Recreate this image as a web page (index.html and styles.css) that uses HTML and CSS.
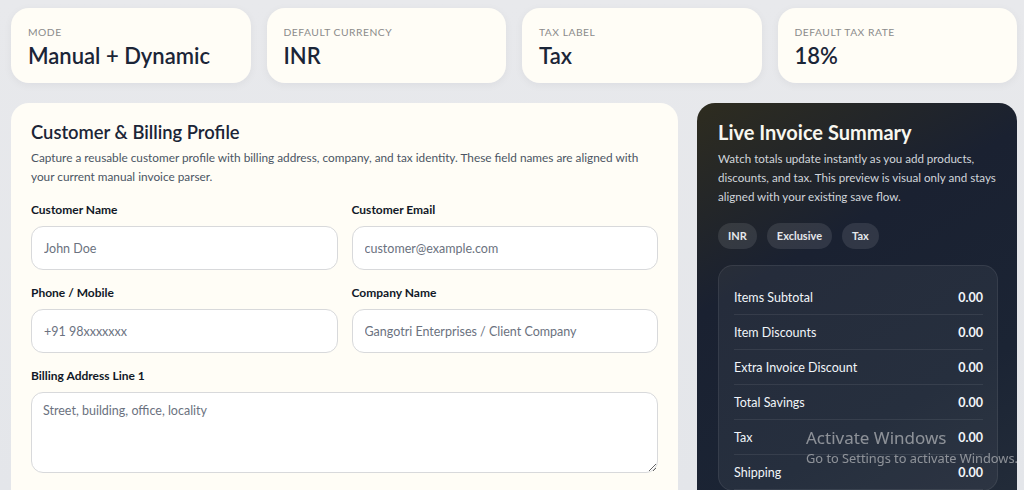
FILE: index.html
```html
<!DOCTYPE html>
<html lang="en">
<head>
    <meta charset="UTF-8">
    <meta name="viewport" content="width=device-width, initial-scale=1.0">
    <title>Manual Invoice</title>
    <link rel="stylesheet" href="styles.css">
</head>
<body>
    <div class="page">
        <!-- 상단 설정 카드 -->
        <div class="stats">
            <div class="stat">
                <div class="stat-label">Mode</div>
                <div class="stat-value">Manual + Dynamic</div>
            </div>
            <div class="stat">
                <div class="stat-label">Default Currency</div>
                <div class="stat-value">INR</div>
            </div>
            <div class="stat">
                <div class="stat-label">Tax Label</div>
                <div class="stat-value">Tax</div>
            </div>
            <div class="stat">
                <div class="stat-label">Default Tax Rate</div>
                <div class="stat-value">18%</div>
            </div>
        </div>

        <div class="main">
            <!-- 고객 정보 -->
            <section class="card">
                <h2 class="card-title">Customer &amp; Billing Profile</h2>
                <p class="card-desc">Capture a reusable customer profile with billing address, company, and tax identity. These field names are aligned with your current manual invoice parser.</p>

                <div class="fields">
                    <div class="field">
                        <label>Customer Name</label>
                        <input type="text" placeholder="John Doe">
                    </div>
                    <div class="field">
                        <label>Customer Email</label>
                        <input type="text" placeholder="customer@example.com">
                    </div>
                    <div class="field">
                        <label>Phone / Mobile</label>
                        <input type="text" placeholder="+91 98xxxxxxx">
                    </div>
                    <div class="field">
                        <label>Company Name</label>
                        <input type="text" placeholder="Gangotri Enterprises / Client Company">
                    </div>
                    <div class="field wide">
                        <label>Billing Address Line 1</label>
                        <textarea placeholder="Street, building, office, locality"></textarea>
                    </div>
                </div>
            </section>

            <!-- 요약 패널 -->
            <aside class="summary">
                <h2 class="summary-title">Live Invoice Summary</h2>
                <p class="summary-desc">Watch totals update instantly as you add products, discounts, and tax. This preview is visual only and stays aligned with your existing save flow.</p>

                <div class="pills">
                    <span class="pill">INR</span>
                    <span class="pill">Exclusive</span>
                    <span class="pill">Tax</span>
                </div>

                <div class="totals">
                    <div class="total-row"><span>Items Subtotal</span><b>0.00</b></div>
                    <div class="total-row"><span>Item Discounts</span><b>0.00</b></div>
                    <div class="total-row"><span>Extra Invoice Discount</span><b>0.00</b></div>
                    <div class="total-row"><span>Total Savings</span><b>0.00</b></div>
                    <div class="total-row"><span>Tax</span><b>0.00</b></div>
                    <div class="total-row"><span>Shipping</span><b>0.00</b></div>
                </div>
            </aside>
        </div>
    </div>

    <!-- 워터마크 -->
    <div class="watermark">
        <div class="wm-title">Activate Windows</div>
        <div class="wm-sub">Go to Settings to activate Windows.</div>
    </div>
</body>
</html>
```

FILE: styles.css
```css
html, body {
    margin: 0;
    padding: 0;
    height: 100%;
    overflow: hidden;
}

body {
    font-family: 'Lato', 'Noto Sans', sans-serif;
    background: linear-gradient(180deg, #e8e9ec 0%, #e4e6ea 100%);
    color: #1e293b;
}

.page {
    height: 100vh;
    box-sizing: border-box;
    overflow: hidden;
    padding: 8px 7px 0 11px;
}

/* 상단 카드 */
.stats {
    display: grid;
    grid-template-columns: repeat(4, 1fr);
    gap: 16px;
}

.stat {
    background-color: #fffdf6;
    border-radius: 18px;
    height: 75px;
    box-sizing: border-box;
    padding: 18px 17px 0;
    box-shadow: 0 2px 8px rgba(15, 23, 42, 0.05);
}

.stat-label {
    font-size: 10.3px;
    letter-spacing: 0.5px;
    text-transform: uppercase;
    color: #8b8b8b;
    line-height: 12px;
}

.stat-value {
    margin-top: 5px;
    font-size: 22px;
    font-weight: 600;
    color: #1b2537;
    line-height: 26px;
}

/* 본문 */
.main {
    display: grid;
    grid-template-columns: minmax(0, 1fr) 320px;
    gap: 19px;
    margin-top: 20px;
}

.card {
    background-color: #fffdf6;
    border-radius: 18px;
    padding: 17px 20px 30px;
    height: 420px;
    box-sizing: border-box;
}

.card-title {
    margin: 0;
    font-size: 18.4px;
    font-weight: 600;
    color: #1b2537;
    line-height: 24px;
}

.card-desc {
    margin: 4px 0 0;
    font-size: 11.8px;
    line-height: 19px;
    color: #4b5563;
}

.fields {
    display: grid;
    grid-template-columns: 1fr 1fr;
    column-gap: 14px;
    row-gap: 15px;
    margin-top: 16px;
}

.field.wide {
    grid-column: 1 / -1;
}

.field label {
    display: block;
    font-size: 12px;
    font-weight: 700;
    color: #111827;
    line-height: 16px;
    margin-bottom: 8px;
}

.field input,
.field textarea {
    display: block;
    width: 100%;
    box-sizing: border-box;
    height: 44px;
    padding: 0 12px;
    border: 1px solid #d8d9db;
    border-radius: 12px;
    background: #ffffff;
    font-family: inherit;
    font-size: 12.5px;
    color: #1e293b;
}

.field textarea {
    height: 81px;
    padding: 10px 11px;
    resize: vertical;
}

.field input::placeholder,
.field textarea::placeholder {
    color: #6b7280;
}

/* 요약 */
.summary {
    background: linear-gradient(150deg, #2e2c1f 0%, #1a2131 35%, #1b2434 70%, #242d3a 100%);
    border-radius: 18px;
    padding: 17px 19px 30px 21px;
    height: 420px;
    box-sizing: border-box;
    color: #ffffff;
}

.summary-title {
    margin: 0;
    font-size: 20px;
    font-weight: 700;
    line-height: 24px;
    color: #f8f7ef;
}

.summary-desc {
    margin: 5px 0 0;
    font-size: 11.6px;
    line-height: 19px;
    color: #d1d5db;
}

.pills {
    display: flex;
    gap: 10px;
    margin-top: 17px;
}

.pill {
    height: 26px;
    line-height: 26px;
    padding: 0 10px;
    border-radius: 13px;
    background: rgba(255, 255, 255, 0.1);
    font-size: 11px;
    font-weight: 700;
    color: #e5e7eb;
}

.totals {
    margin-top: 16px;
    padding: 14px 14px 0 15px;
    border-radius: 15px;
    background: rgba(255, 255, 255, 0.05);
    border: 1px solid rgba(255, 255, 255, 0.08);
}

.total-row {
    display: flex;
    justify-content: space-between;
    align-items: center;
    height: 35px;
    box-sizing: border-box;
    border-bottom: 1px solid rgba(255, 255, 255, 0.08);
    font-size: 12.5px;
    color: #f1f5f9;
}

.total-row b {
    font-weight: 700;
}

/* 워터마크 */
.watermark {
    position: fixed;
    left: 806px;
    top: 427px;
    color: rgba(225, 225, 225, 0.55);
    font-family: 'Noto Sans', sans-serif;
    white-space: nowrap;
    pointer-events: none;
}

.wm-title {
    font-size: 17px;
    line-height: 21px;
}

.wm-sub {
    font-size: 12.8px;
    line-height: 18px;
    margin-top: 1px;
}
```
